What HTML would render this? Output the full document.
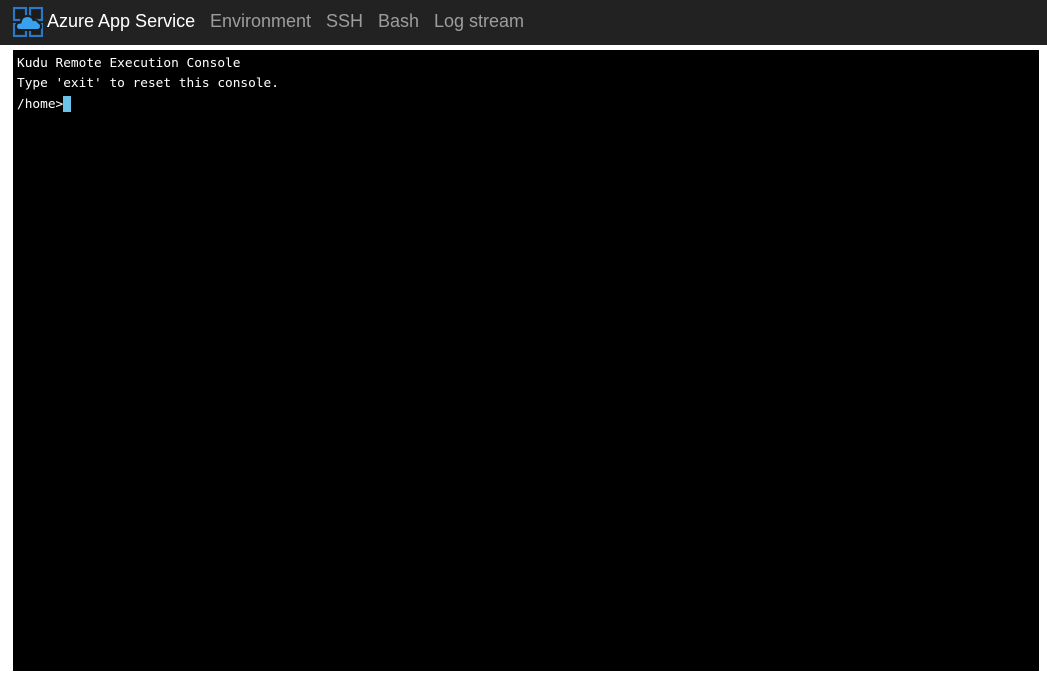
<!DOCTYPE html>
<html><head><style>
html,body{margin:0;padding:0;width:1047px;height:690px;background:#fff;overflow:hidden}
.hdr{position:absolute;left:0;top:0;width:1047px;height:45px;background:#222;font-family:"Liberation Sans",sans-serif;font-size:18px}
.hdr span{position:absolute;top:11px;color:#9d9d9d}
.con{position:absolute;left:13px;top:50px;width:1026px;height:621px;background:#000;font-family:"DejaVu Sans Mono","Liberation Mono",monospace;font-size:12.8px;color:#fff}
.con div{position:absolute;left:4px;white-space:pre}
.cur{display:inline-block;width:8px;height:16px;background:#6ac3e8;vertical-align:-4px}
</style></head><body>
<div class="hdr">
<svg style="position:absolute;left:12px;top:6px" width="32" height="32" viewBox="0 0 32 32">
<rect x="0" y="0" width="32" height="32" fill="#1c1c1c"/>
<g fill="none" stroke="#2b78c5" stroke-width="2.2">
<rect x="2" y="2" width="12" height="12"/><rect x="18" y="2" width="12" height="12"/>
<rect x="2" y="18" width="12" height="12"/><rect x="18" y="18" width="12" height="12"/></g>
<path d="M8 24 Q4 24 4 20.5 Q4 16.5 8.5 16.5 Q9.5 10 15.5 10 Q20 10 21.5 14 Q25 13.5 26.5 16.5 Q29 17.5 29 20.5 Q29 24 25 24 Z" fill="#3aa0f0" stroke="#1c1c1c" stroke-width="2"/>
</svg>
<span style="left:47px;color:#fff">Azure App Service</span>
<span style="left:210px">Environment</span>
<span style="left:326px">SSH</span>
<span style="left:378px">Bash</span>
<span style="left:434px">Log stream</span>
</div>
<div class="con">
<div style="top:6px">Kudu Remote Execution Console</div>
<div style="top:26px">Type 'exit' to reset this console.</div>
<div style="top:46px">/home&gt;<span class="cur"></span></div>
</div>
</body></html>
